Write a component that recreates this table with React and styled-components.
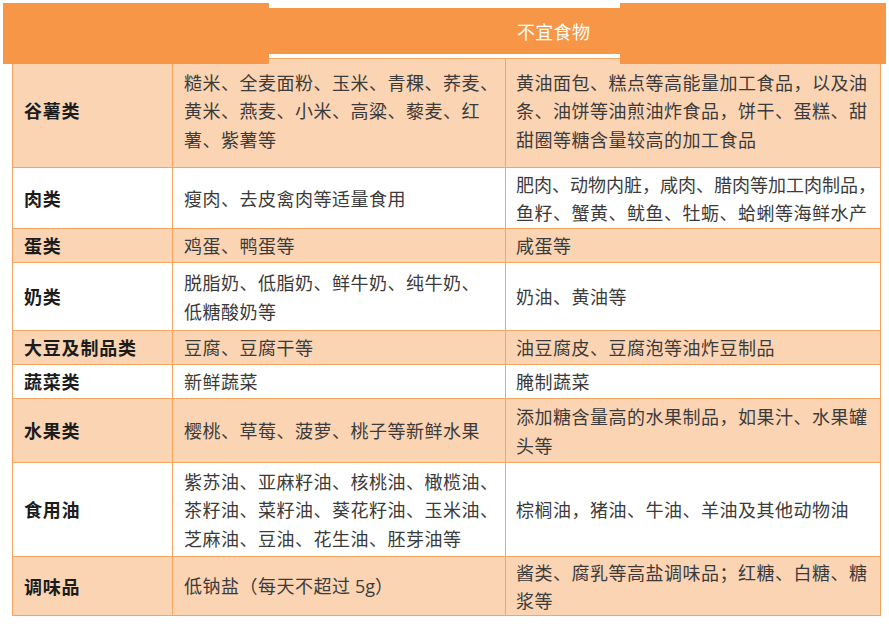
import React from "react";
import styled, { createGlobalStyle } from "styled-components";

const Global = createGlobalStyle`
  html, body { margin: 0; padding: 0; background: #ffffff; }
  body { font-family: "Noto Sans CJK SC", "Noto Sans", sans-serif; }
`;

const ORANGE = "#F79646";
const PEACH = "#FBD4B4";
const LINE = "#F5A562";

const Page = styled.div`
  width: 889px;
  height: 627px;
  padding: 3px 0 0 3px;
  box-sizing: border-box;
  overflow: hidden;
`;

const Header = styled.div`
  position: relative;
  z-index: 2;
  display: flex;
  align-items: flex-start;
  width: 883px;
  height: 61px;
  margin-bottom: -6px;
`;

const Cap = styled.div`
  width: ${(p) => p.$w}px;
  height: 61px;
  background: ${ORANGE};
  flex: none;
`;

const Mid = styled.div`
  flex: none;
  width: 351px;
  height: 46px;
  margin-top: 5px;
  background: ${ORANGE};
  color: #ffffff;
  font-size: 18px;
  line-height: 46px;
  padding-left: 248px;
  box-sizing: border-box;
  letter-spacing: 0.3px;
`;

const Table = styled.table`
  margin-left: 9px;
  width: 868px;
  border-collapse: collapse;
  table-layout: fixed;
  border: 1.5px solid ${LINE};
`;

const Row = styled.tr`
  height: ${(p) => p.$h}px;
  background: ${(p) => (p.$peach ? PEACH : "#ffffff")};
`;

const Cell = styled.td`
  border: 1.5px solid ${LINE};
  padding: 0 0 ${(p) => p.$pb ?? 0}px ${(p) => p.$pl ?? 11}px;
  vertical-align: middle;
  font-size: 18px;
  line-height: 28.5px;
  color: #3b3b3b;
  letter-spacing: 0.5px;
  box-sizing: border-box;
`;

const Label = styled(Cell)`
  font-weight: 700;
  color: #1c1c1c;
  letter-spacing: 0.8px;
`;

const Line = styled.span`
  display: block;
  white-space: nowrap;
  letter-spacing: ${(p) => (p.$tight ? "0px" : "inherit")};
`;

const Latin = styled.span`
  font-family: "Open Sans", "Liberation Sans", sans-serif;
  letter-spacing: 0;
`;

const rows = [
  {
    h: 109,
    pb: 5,
    label: "谷薯类",
    good: ["糙米、全麦面粉、玉米、青稞、荞麦、", "黄米、燕麦、小米、高粱、藜麦、红", "薯、紫薯等"],
    bad: ["黄油面包、糕点等高能量加工食品，以及油", "条、油饼等油煎油炸食品，饼干、蛋糕、甜", "甜圈等糖含量较高的加工食品"],
  },
  {
    h: 61,
    label: "肉类",
    good: ["瘦肉、去皮禽肉等适量食用"],
    bad: [{ t: "肥肉、动物内脏，咸肉、腊肉等加工肉制品，", tight: true }, "鱼籽、蟹黄、鱿鱼、牡蛎、蛤蜊等海鲜水产"],
  },
  { h: 34, label: "蛋类", good: ["鸡蛋、鸭蛋等"], bad: ["咸蛋等"] },
  {
    h: 68,
    label: "奶类",
    good: ["脱脂奶、低脂奶、鲜牛奶、纯牛奶、", "低糖酸奶等"],
    bad: ["奶油、黄油等"],
  },
  { h: 34, label: "大豆及制品类", good: ["豆腐、豆腐干等"], bad: ["油豆腐皮、豆腐泡等油炸豆制品"] },
  { h: 34, label: "蔬菜类", good: ["新鲜蔬菜"], bad: ["腌制蔬菜"] },
  {
    h: 64,
    label: "水果类",
    good: ["樱桃、草莓、菠萝、桃子等新鲜水果"],
    bad: ["添加糖含量高的水果制品，如果汁、水果罐", "头等"],
  },
  {
    h: 94,
    label: "食用油",
    good: ["紫苏油、亚麻籽油、核桃油、橄榄油、", "茶籽油、菜籽油、葵花籽油、玉米油、", "芝麻油、豆油、花生油、胚芽油等"],
    bad: ["棕榈油，猪油、牛油、羊油及其他动物油"],
  },
  {
    h: 59,
    label: "调味品",
    good: [
      {
        node: (
          <>
            低钠盐（每天不超过 <Latin>5g</Latin>）
          </>
        ),
      },
    ],
    bad: ["酱类、腐乳等高盐调味品；红糖、白糖、糖", "浆等"],
  },
];

const renderLines = (lines) =>
  lines.map((l, i) => {
    if (typeof l === "string") return <Line key={i}>{l}</Line>;
    if (l.node) return <Line key={i}>{l.node}</Line>;
    return (
      <Line key={i} $tight={l.tight}>
        {l.t}
      </Line>
    );
  });

export default function App() {
  return (
    <>
      <Global />
      <Page>
        <Header>
          <Cap $w={266} />
          <Mid>不宜食物</Mid>
          <Cap $w={266} />
        </Header>
        <Table>
          <colgroup>
            <col style={{ width: 160 }} />
            <col style={{ width: 333 }} />
            <col style={{ width: 375 }} />
          </colgroup>
          <tbody>
            {rows.map((r, i) => (
              <Row key={r.label} $h={r.h} $peach={i % 2 === 0}>
                <Label $pl={11} $pb={r.pb}>{r.label}</Label>
                <Cell $pl={11} $pb={r.pb}>{renderLines(r.good)}</Cell>
                <Cell $pl={10} $pb={r.pb}>{renderLines(r.bad)}</Cell>
              </Row>
            ))}
          </tbody>
        </Table>
      </Page>
    </>
  );
}
